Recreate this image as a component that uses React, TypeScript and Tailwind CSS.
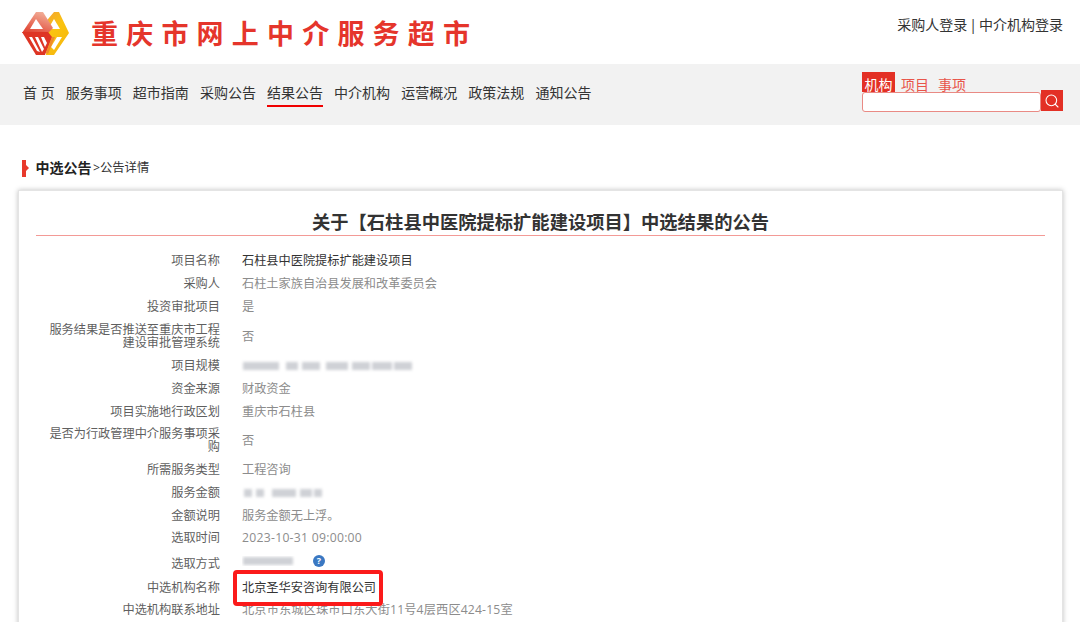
import { Search } from "lucide-react";

const navItems = ["首 页", "服务事项", "超市指南", "采购公告", "结果公告", "中介机构", "运营概况", "政策法规", "通知公告"];

const Blur = ({ bars }: { bars: [number, number][] }) => (
    <div className="relative h-[10px] w-[180px] blur-[1.8px]">
        {bars.map(([left, width]) => (
            <span key={left} className="absolute top-[1px] h-[8px] bg-[#cfd1d6]" style={{ left, width }} />
        ))}
    </div>
);

const Logo = () => (
    <svg width="50" height="46" viewBox="0 0 50 46" className="shrink-0">
        <defs>
            <linearGradient id="lr" x1="0.7" y1="0" x2="0.2" y2="1">
                <stop offset="0" stopColor="#f2b09a" />
                <stop offset="1" stopColor="#e0412f" />
            </linearGradient>
            <linearGradient id="ly" x1="0" y1="0" x2="0.6" y2="1">
                <stop offset="0" stopColor="#f2a03a" />
                <stop offset="0.5" stopColor="#fac30f" />
                <stop offset="1" stopColor="#f6b80f" />
            </linearGradient>
        </defs>
        <path d="M22 14 L33 1 L38 1 L48 22 L33 44 L25 44 L26 22 Z" fill="url(#ly)" />
        <path d="M33 8 L39 18 L27 18 Z" fill="#ffffff" />
        <path d="M15 1 L22 1 L32 17 L27 22 L1 22 Z" fill="url(#lr)" />
        <path d="M15 8 L22 18 L9 18 Z" fill="#ffffff" />
        <path d="M1 21 L27 21 L31 26 L24 44 L15 44 Z" fill="#de3524" />
        <path d="M8 26 L11 26 L19 41 L16 40 Z M14 26 L17 26 L23 38 L21 41 Z M20 26 L23 26 L26 32 L24 36 Z" fill="#ffffff" />
        <path d="M36 26 L41 26 L33 39 L30 36 Z" fill="#ffffff" />
        <path d="M31 26 L34 26 L27 43 L25 42 Z" fill="#f08a2a" />
    </svg>
);

type Row = { label: React.ReactNode; value: React.ReactNode; h: string; extra?: string };

const rows: Row[] = [
    { label: "项目名称", value: "石柱县中医院提标扩能建设项目", h: "h-[23px]", extra: "text-[#333]" },
    { label: "采购人", value: "石柱土家族自治县发展和改革委员会", h: "h-[23px]" },
    { label: "投资审批项目", value: "是", h: "h-[23px]" },
    { label: "服务结果是否推送至重庆市工程建设审批管理系统", value: "否", h: "h-[36px]" },
    { label: "项目规模", value: <Blur bars={[[1, 36], [44, 12], [60, 18], [84, 22], [110, 18], [130, 20], [152, 18]]} />, h: "h-[23px]" },
    { label: "资金来源", value: "财政资金", h: "h-[23px]" },
    { label: "项目实施地行政区划", value: "重庆市石柱县", h: "h-[22px]" },
    { label: "是否为行政管理中介服务事项采购", value: "否", h: "h-[36px]" },
    { label: "所需服务类型", value: "工程咨询", h: "h-[23px]" },
    { label: "服务金额", value: <Blur bars={[[2, 8], [14, 8], [30, 24], [58, 12], [72, 8]]} />, h: "h-[23px]" },
    { label: "金额说明", value: "服务金额无上浮。", h: "h-[22px]" },
    { label: "选取时间", value: "2023-10-31 09:00:00", h: "h-[23px]", extra: "tracking-[0.27px]" },
    {
        label: "选取方式",
        value: (
            <div className="flex items-center">
                <div className="-mt-[4px] w-[71px] overflow-hidden">
                    <Blur bars={[[1, 50]]} />
                </div>
                <span className="-mt-[5px] flex h-[12px] w-[12px] items-center justify-center rounded-full bg-[#3a78c2] text-[9px] font-bold leading-none text-white">?</span>
            </div>
        ),
        h: "h-[28px]",
    },
    {
        label: "中选机构名称",
        value: (
            <div className="relative text-[#333]">
                北京圣华安咨询有限公司
                <span className="absolute -bottom-[12px] -left-[9px] -top-[11px] w-[150px] rounded-[4px] border-[4px] border-[#fb1a1a]" />
            </div>
        ),
        h: "h-[20px]",
    },
    { label: "中选机构联系地址", value: "北京市东城区珠市口东大街11号4层西区424-15室", h: "h-[25px]", extra: "tracking-[0.15px]" },
];

export default function App() {
    return (
        <div className="h-[622px] w-[1080px] overflow-hidden bg-white font-['Open_Sans','Noto_Sans_CJK_SC',sans-serif] text-[#333]">
            <header className="flex h-[64px] justify-between pl-[21px] pr-[17px]">
                <div className="flex items-center pt-[3px]">
                    <Logo />
                    <h1 className="ml-[20px] text-[27px] font-semibold leading-none tracking-[8.2px] text-[#e5352b]">重庆市网上中介服务超市</h1>
                </div>
                <div className="pt-[15px] text-[14px] leading-[20px]">
                    采购人登录<span className="mx-[2px]">|</span>中介机构登录
                </div>
            </header>

            <nav className="flex h-[61px] items-start justify-between bg-[#f2f2f2] pl-[23px] pr-[17px]">
                <ul className="flex gap-[11.1px] pt-[18px]">
                    {navItems.map((item) => (
                        <li
                            key={item}
                            className={`h-[25px] text-[14px] leading-[22px] ${item === "结果公告" ? "border-b-[2px] border-[#f00000]" : ""}`}
                        >
                            {item}
                        </li>
                    ))}
                </ul>
                <div className="w-[201px] pt-[8px]">
                    <div className="flex h-[20px] gap-[6px] text-[14px] leading-[26px] text-[#e8554a]">
                        <span className="w-[33px] bg-[#e33025] text-center text-white">机构</span>
                        <span>项目</span>
                        <span className="ml-[3px]">事项</span>
                    </div>
                    <div className="flex items-start">
                        <div className="h-[20px] flex-1 rounded-[3px] border border-[#e98a84] bg-white" />
                        <button className="-mt-[2px] flex h-[21px] w-[22px] items-center justify-center bg-[#e33025]">
                            <Search size={16} strokeWidth={1.6} className="text-white" />
                        </button>
                    </div>
                </div>
            </nav>

            <div className="flex items-center pl-[22px] pt-[33px]">
                <span className="relative h-[17px] w-[4px] bg-[#e8392c]">
                    <span className="absolute left-[4px] top-[5px] border-y-[3.5px] border-l-[3px] border-y-transparent border-l-[#e8392c]" />
                </span>
                <span className="ml-[9.5px] text-[14px] font-bold leading-[20px] text-[#222]">中选公告</span>
                <span className="ml-[1.5px] text-[12.3px] leading-[20px]">&gt;公告详情</span>
            </div>

            <main className="ml-[18px] mr-[17px] mt-[12px] h-[480px] border border-[#e4e4e4] bg-white px-[17px] shadow-[0_0_5px_rgba(0,0,0,0.25)]">
                <h2 className="h-[45px] border-b border-[#f39a96] pt-[17px] text-center text-[18.3px] font-bold leading-[27px] text-[#333]">
                    关于【石柱县中医院提标扩能建设项目】中选结果的公告
                </h2>
                <div className="pt-[13px]">
                    {rows.map((row, i) => (
                        <div key={i} className={`flex items-center text-[12.2px] leading-[13px] ${row.h}`}>
                            <div className="ml-[12px] w-[172px] text-right text-[#5f5f5f]">{row.label}</div>
                            <div className={`ml-[22px] ${row.extra?.includes("#") ? "" : "text-[#8c8c8c]"} ${row.extra ?? ""}`}>{row.value}</div>
                        </div>
                    ))}
                </div>
            </main>
        </div>
    );
}
